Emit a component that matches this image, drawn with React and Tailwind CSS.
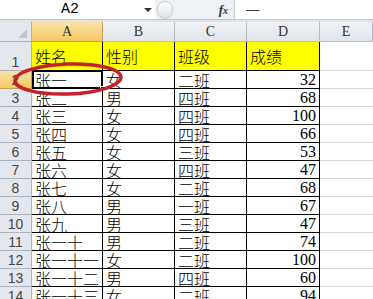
import React from "react";

const rows = [
  ["张一", "女", "二班", "32"],
  ["张二", "男", "四班", "68"],
  ["张三", "女", "四班", "100"],
  ["张四", "女", "四班", "66"],
  ["张五", "女", "三班", "53"],
  ["张六", "女", "四班", "47"],
  ["张七", "女", "二班", "68"],
  ["张八", "男", "一班", "67"],
  ["张九", "男", "三班", "47"],
  ["张一十", "男", "二班", "74"],
  ["张一十一", "女", "二班", "100"],
  ["张一十二", "男", "四班", "60"],
  ["张一十三", "女", "二班", "94"],
];

const cjk = { fontFamily: '"Noto Sans CJK SC", sans-serif', fontWeight: 300 };
const serif = { fontFamily: '"Liberation Serif", "Noto Sans CJK SC", serif' };
const sans = { fontFamily: '"Liberation Sans", sans-serif' };

export default function App() {
  return (
    <div className="relative w-[373px] h-[299px] overflow-hidden bg-white">
      {/* formula bar */}
      <div className="flex h-[20px] border-b border-[#c3c8d0] bg-[#eef1f5]">
        <div className="w-[155px] bg-white flex items-center relative">
          <span className="ml-[61px] text-[15px] text-black leading-none" style={{ fontFamily: '"Liberation Mono", monospace' }}>A2</span>
          <span className="absolute left-[144px] top-[8px] w-0 h-0 border-l-[4px] border-r-[4px] border-t-[4px] border-l-transparent border-r-transparent border-t-[#333]" />
        </div>
        <div className="w-[20px] flex items-center justify-center">
          <div className="w-[16px] h-[18px] rounded-full border border-[#c7ccd4] bg-gradient-to-b from-white to-[#dde2e9]" />
        </div>
        <div className="w-[60px] flex items-center justify-end pr-[6px] border-r border-[#c3c8d0]">
          <span className="italic font-bold text-[13px] text-[#333]" style={serif}>f<span className="text-[10px]">x</span></span>
        </div>
        <div className="flex-1 bg-white flex items-center pl-[10px]">
          <span className="text-[15px] text-black leading-none" style={cjk}>一</span>
        </div>
      </div>
      <div className="h-[2px] bg-[#dfe3e8]" />

      {/* sheet */}
      <div className="grid grid-cols-[32px_71px_72px_72px_73px_1fr] grid-rows-[20px_29px_repeat(13,18px)]">
        {/* header row */}
        <div className="relative bg-[#e4e8ee] border-r border-b border-[#aab3bf]">
          <span className="absolute right-[4px] bottom-[3px] w-0 h-0" style={{ borderBottom: "9px solid #c2c8d0", borderLeft: "9px solid transparent" }} />
        </div>
        <div className="bg-gradient-to-b from-[#fbe3a6] to-[#f6c85f] border-r border-b border-[#c2a35a] flex items-center justify-center text-[14px] text-[#333]" style={serif}>A</div>
        {["B", "C", "D", "E"].map((c) => (
          <div key={c} className="bg-gradient-to-b from-[#f0f2f5] to-[#e1e5eb] border-r border-b border-[#b5bcc6] flex items-center justify-center text-[14px] text-[#333]" style={serif}>{c}</div>
        ))}

        {/* row 1 */}
        <div className="bg-[#e4e8ee] border-r border-b border-[#aab3bf] flex items-end justify-center pb-[1px] text-[14px] text-[#444] leading-none" style={sans}>1</div>
        {["姓名", "性别", "班级", "成绩"].map((t) => (
          <div key={t} className="bg-[#ffff00] border-r border-b border-black flex items-center pl-[3px] pb-[1px] text-[16px] text-black leading-none" style={cjk}>{t}</div>
        ))}
        <div className="border-b border-[#d4d8de]" />

        {rows.map((r, i) => {
          const n = i + 2;
          const sel = n === 2;
          return (
            <React.Fragment key={n}>
              <div className={`${sel ? "bg-gradient-to-b from-[#fbe3a6] to-[#f6c85f] border-[#c2a35a]" : "bg-[#e4e8ee] border-[#aab3bf]"} border-r border-b flex items-center justify-center text-[14px] text-[#444] leading-none`} style={sans}>{n}</div>
              <div className="relative border-r border-b border-black flex items-center pl-[3px] text-[16px] text-black leading-none" style={cjk}>
                {r[0]}
                {sel && (
                  <>
                    <span className="absolute left-0 top-[-1px] right-[-1px] bottom-[-1px] border-2 border-black pointer-events-none" />
                    <span className="absolute right-[-3px] bottom-[-3px] w-[5px] h-[5px] bg-black border border-white" />
                  </>
                )}
              </div>
              <div className="border-r border-b border-black flex items-center pl-[3px] text-[16px] text-black leading-none" style={cjk}>{r[1]}</div>
              <div className="border-r border-b border-black flex items-center pl-[3px] text-[16px] text-black leading-none" style={cjk}>{r[2]}</div>
              <div className="border-r border-b border-black flex items-center justify-end pr-[3px] text-[16px] text-black leading-none" style={serif}>{r[3]}</div>
              <div className="border-b border-[#d4d8de]" />
            </React.Fragment>
          );
        })}
      </div>

      {/* red ellipse annotation */}
      <svg className="absolute left-0 top-0 pointer-events-none" width="373" height="299">
        <ellipse cx="68" cy="79" rx="53" ry="15" fill="none" stroke="#c8202a" strokeWidth="3.5" transform="rotate(-2 68 79)" />
      </svg>
    </div>
  );
}
